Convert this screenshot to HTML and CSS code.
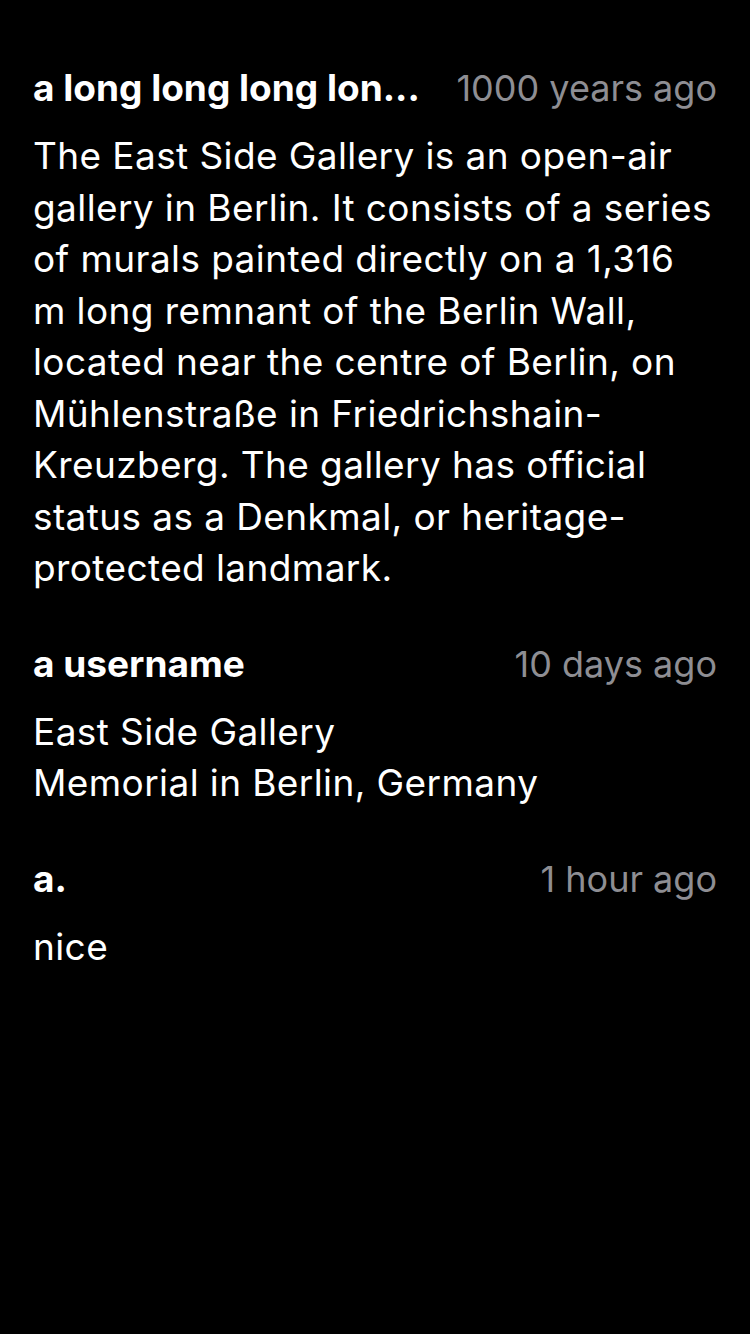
FILE: index.html
```html
<!DOCTYPE html>
<html lang="en">
<head>
<meta charset="utf-8">
<link rel="stylesheet" href="styles.css">
</head>
<body>
<main class="list">
  <article class="comment">
    <header class="comment-head">
      <span class="user">a long long long lon...</span>
      <span class="time">1000 years ago</span>
    </header>
    <p class="text">The East Side Gallery is an open-air gallery in Berlin. It consists of a series of murals painted directly on a 1,316 m long remnant of the Berlin Wall, located near the centre of Berlin, on Mühlenstraße in Friedrichshain-Kreuzberg. The gallery has official status as a Denkmal, or heritage-protected landmark.</p>
  </article>
  <article class="comment">
    <header class="comment-head">
      <span class="user">a username</span>
      <span class="time">10 days ago</span>
    </header>
    <p class="text">East Side Gallery<br>Memorial in Berlin, Germany</p>
  </article>
  <article class="comment">
    <header class="comment-head">
      <span class="user">a.</span>
      <span class="time">1 hour ago</span>
    </header>
    <p class="text">nice</p>
  </article>
</main>
</body>
</html>
```
FILE: styles.css
```css
html, body {
  margin: 0;
  padding: 0;
  background: #000;
  height: 100%;
}
body {
  font-family: Inter, Roboto, "Liberation Sans", sans-serif;
  color: #fff;
}
.list {
  display: flex;
  flex-direction: column;
  gap: 46px;
  padding: 64px 33px 0 33px;
}
.comment {
  display: flex;
  flex-direction: column;
  gap: 18px;
}
.comment-head {
  display: flex;
  justify-content: space-between;
  align-items: baseline;
  gap: 20px;
  font-size: 36px;
  line-height: 48px;
}
.user {
  font-size: 37px;
  font-weight: 700;
  white-space: nowrap;
  overflow: hidden;
  text-overflow: ellipsis;
  min-width: 0;
}
.time {
  color: #8e8e93;
  white-space: nowrap;
  flex-shrink: 0;
}
.text {
  margin: 0;
  max-width: 681px;
  font-size: 37px;
  letter-spacing: 0.4px;
  line-height: 51.5px;
}
```
